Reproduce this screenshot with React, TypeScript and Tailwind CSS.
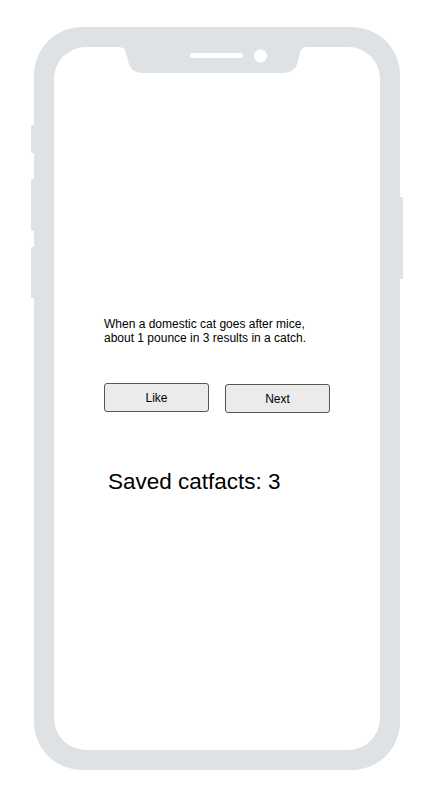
import { useState } from "react";

const fact = "When a domestic cat goes after mice, about 1 pounce in 3 results in a catch.";

const Notch = () => (
  <svg className="ml-[14px] shrink-0" width="190" height="26" viewBox="0 0 190 26">
    <path
      d="M0 0 C5 0 7 2 8 6 L10 14 C12 22 16 26 26 26 L164 26 C174 26 178 22 180 14 L182 6 C183 2 185 0 190 0 Z"
      fill="#dfe2e5"
    />
    <rect x="72" y="6" width="53" height="5" rx="2.5" fill="#ffffff" />
    <circle cx="142.5" cy="9" r="6.5" fill="#ffffff" />
  </svg>
);

const App = () => {
  const [saved, setSaved] = useState<number>(3);

  return (
    <div className="w-[427px] h-[792px] bg-white pt-[27px] pl-[31px] flex items-start font-['Liberation_Sans',Arial,sans-serif]">
      {/* left side buttons */}
      <div className="w-[3px] flex flex-col pt-[98px]">
        <div className="h-[28px] rounded-l-[1px] bg-[#dfe2e5]" />
        <div className="h-[52px] mt-[26px] rounded-l-[1px] bg-[#dfe2e5]" />
        <div className="h-[51px] mt-[16px] rounded-l-[1px] bg-[#dfe2e5]" />
      </div>

      {/* phone frame */}
      <div className="w-[366px] h-[743px] rounded-[48px] bg-[#dfe2e5] p-5">
        {/* screen */}
        <div className="h-full rounded-[32px] bg-white pl-[50px] flex flex-col">
          <Notch />

          <p className="w-[220px] mt-[244px] text-[12px] leading-[14px] text-black">{fact}</p>

          <div className="flex gap-4 mt-[38px]">
            <button
              onClick={() => setSaved(saved + 1)}
              className="w-[105px] h-[29px] rounded-[3px] border border-[#555555] bg-[#ebebeb] text-[12px] text-black"
            >
              Like
            </button>
            <button className="w-[105px] h-[29px] mt-px rounded-[3px] border border-[#555555] bg-[#ebebeb] text-[12px] text-black">
              Next
            </button>
          </div>

          <div className="mt-[55px] ml-[4px] text-[22.5px] leading-[28px] text-black">
            Saved catfacts: {saved}
          </div>
        </div>
      </div>

      {/* right side button */}
      <div className="w-[3px] flex flex-col pt-[170px]">
        <div className="h-[82px] rounded-r-[1px] bg-[#dfe2e5]" />
      </div>
    </div>
  );
};

export default App;
